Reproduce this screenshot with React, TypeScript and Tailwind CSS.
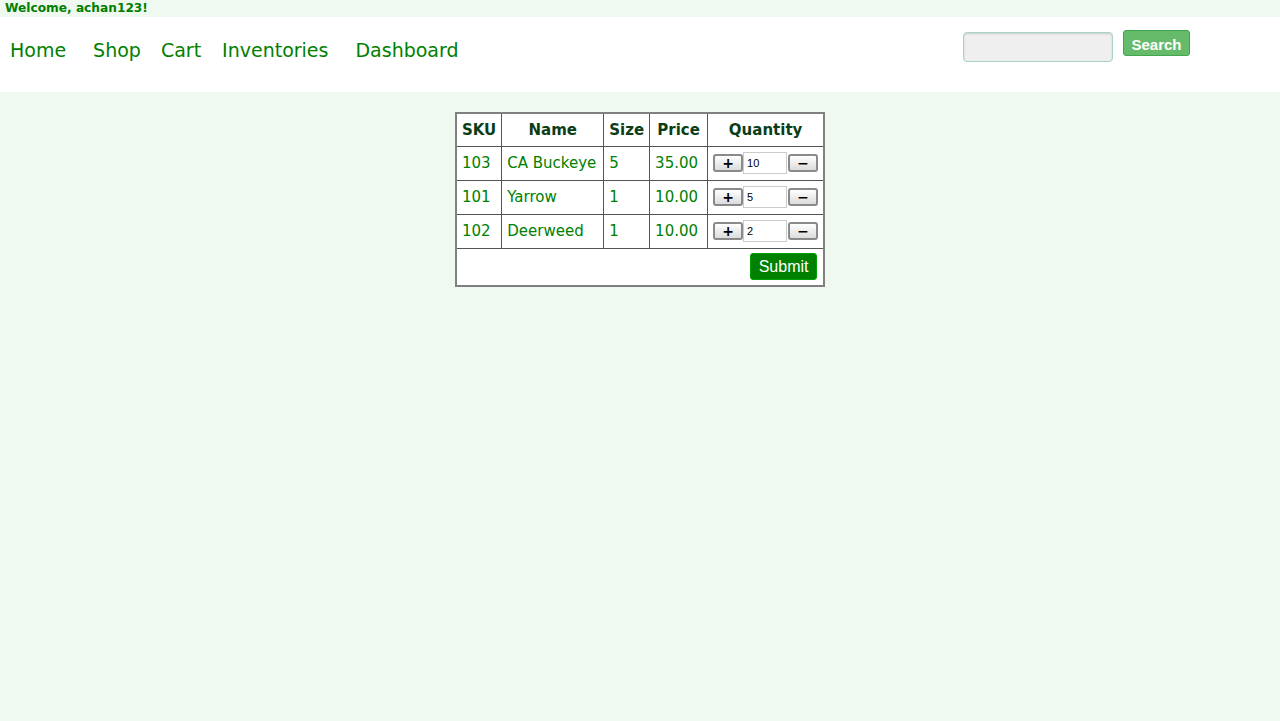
import React from "react";

type Item = { sku: string; name: string; size: string; price: string; qty: string };

const items: Item[] = [
  { sku: "103", name: "CA Buckeye", size: "5", price: "35.00", qty: "10" },
  { sku: "101", name: "Yarrow", size: "1", price: "10.00", qty: "5" },
  { sku: "102", name: "Deerweed", size: "1", price: "10.00", qty: "2" },
];

const font = { fontFamily: '"DejaVu Sans", "Lucida Grande", Verdana, sans-serif' };
const arial = { fontFamily: '"Liberation Sans", Arial, sans-serif' };

const StepButton = ({ label }: { label: string }) => (
  <button className="w-[30px] h-[18px] flex items-center justify-center rounded-[3px] border-2 border-[#8a8a8a] bg-gradient-to-b from-white to-[#dcdcdc] text-black text-[14px] font-bold leading-none">
    {label}
  </button>
);

const App: React.FC = () => {
  return (
    <div className="min-h-[721px] bg-[#eff9f0] text-[#008000]" style={font}>
      <div className="h-[17px] px-[5px] text-[12.2px] font-bold leading-[17px]">Welcome, achan123!</div>
      <div className="h-[75px] bg-white flex items-start">
        <nav className="flex items-center h-[66px] pl-[10px] text-[19px]">
          <a className="mr-[27px]">Home</a>
          <a className="mr-[20px]">Shop</a>
          <a className="mr-[21px]">Cart</a>
          <a className="mr-[27px]">Inventories</a>
          <a>Dashboard</a>
        </nav>
        <div className="ml-auto mr-[90px] flex items-start pt-[13px] gap-[10px]">
          <input className="mt-[2px] w-[150px] h-[30px] rounded-[4px] border border-[#a8d4c0] bg-[#efefef] shadow-[inset_0_1px_2px_rgba(0,0,0,0.15)]" />
          <button
            className="w-[67px] h-[26px] rounded-[3px] border border-[#3fa84f] bg-[#66bb6a] text-white text-[15px] font-bold leading-none pt-[2px]"
            style={arial}
          >
            Search
          </button>
        </div>
      </div>
      <div className="flex justify-center pt-[20px]">
        <table className="bg-white border-2 border-[#808080] border-collapse text-[15px]">
          <thead>
            <tr className="h-[33px] text-[#0b3d17] font-bold">
              <th className="border border-[#555] px-[5px] w-[44px]">SKU</th>
              <th className="border border-[#555] px-[5px] w-[102px]">Name</th>
              <th className="border border-[#555] px-[5px] w-[45px]">Size</th>
              <th className="border border-[#555] px-[5px] w-[58px]">Price</th>
              <th className="border border-[#555] px-[5px] w-[116px]">Quantity</th>
            </tr>
          </thead>
          <tbody>
            {items.map((it) => (
              <tr key={it.sku} className="h-[34px]">
                <td className="border border-[#555] px-[5px]">{it.sku}</td>
                <td className="border border-[#555] px-[5px] whitespace-nowrap">{it.name}</td>
                <td className="border border-[#555] px-[5px]">{it.size}</td>
                <td className="border border-[#555] px-[5px]">{it.price}</td>
                <td className="border border-[#555] px-[5px]">
                  <div className="flex items-center">
                    <StepButton label="+" />
                    <input
                      defaultValue={it.qty}
                      className="w-[44px] h-[22px] border border-[#ccc] bg-white px-[3px] text-[11px] text-black"
                      style={arial}
                    />
                    <div className="ml-[1px]">
                      <StepButton label="−" />
                    </div>
                  </div>
                </td>
              </tr>
            ))}
            <tr className="h-[38px]">
              <td colSpan={5} className="border border-[#555] pl-[5px] pr-[6px] text-right">
                <button
                  className="h-[27px] w-[67px] rounded-[3px] bg-[#008000] text-white text-[16px] border border-[#00a000]"
                  style={arial}
                >
                  Submit
                </button>
              </td>
            </tr>
          </tbody>
        </table>
      </div>
    </div>
  );
};

export default App;
